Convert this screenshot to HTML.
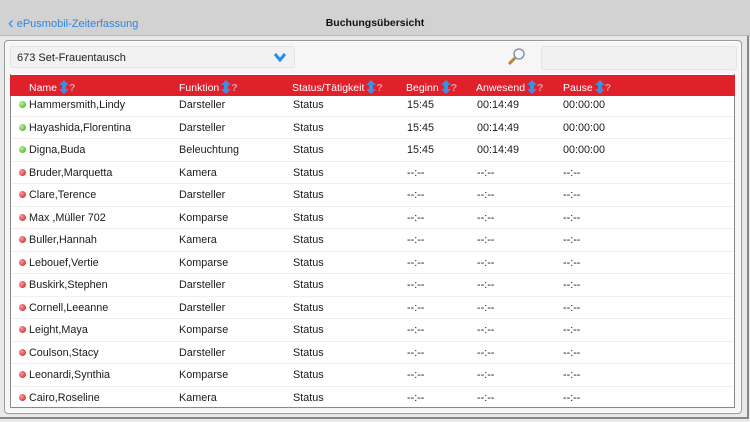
<!DOCTYPE html><html><head><style>
body{margin:0;width:750px;height:422px;background:#e9e9e9;font-family:"Liberation Sans",sans-serif;position:relative;overflow:hidden}
.bar{position:absolute;left:0;top:0;width:750px;height:35px;background:#d2d2d2;border-bottom:1px solid #bbb}
.back{position:absolute;left:8px;top:12px;color:#2c86e6;font-size:11px}
.title{position:absolute;left:0;width:750px;top:17px;text-align:center;font-weight:bold;font-size:10.5px;color:#111}
.panel{position:absolute;left:4px;top:40px;width:736px;height:372px;border:1px solid #999;border-radius:4px;background:#f6f6f6;box-shadow:inset 0 0 0 1px #fff}
.outer{position:absolute;left:0;top:0;width:747px;height:417px;border-right:2px solid #888;border-bottom:2px solid #888}
.sel{position:absolute;left:10px;top:46px;width:285px;height:22px;background:#f2f2f2;border:1px solid #e4e4e4;border-radius:3px;font-size:11px;line-height:22px;padding-left:6px;box-sizing:border-box;color:#222}
.srch{position:absolute;left:541px;top:46px;width:194px;height:22px;background:#f1f1f1;border:1px solid #e4e4e4;border-radius:3px}
.tbl{position:absolute;left:10px;top:74px;width:725px;height:334px;background:#fff;border:1px solid #888;border-top:none;box-sizing:border-box}
.hd{position:absolute;left:10px;top:75px;width:725px;height:21px;background:#e0202b}
.h{position:absolute;top:80px;color:#fff;font-size:10.5px;white-space:nowrap}
.h svg{vertical-align:-3px;margin-left:2px}
.q{color:#e69aa0;font-weight:bold}
.r{position:absolute;left:11px;width:723px;height:22.5px;border-bottom:1px solid #f0f0f0;font-size:10.8px;color:#1a1a1a}
.r span{position:absolute;top:6px}
.d{position:absolute;left:8px;top:8px;width:7px;height:7px;border-radius:50%}
.g{background:radial-gradient(circle at 35% 35%,#b8f59a,#3aa41a)}
.rd{background:radial-gradient(circle at 35% 35%,#ff9a9a,#c81818)}
</style></head><body>
<svg width="0" height="0" style="position:absolute"><defs><symbol id="a" viewBox="0 0 10 14"><path d="M5 0L10 5H7V9H10L5 14L0 9H3V5H0Z" fill="#3d8fe0"/></symbol></defs></svg>
<div class="outer"></div>
<div class="bar"><div class="back"><span style="font-size:17px;position:relative;top:1px">&#x2039;</span> ePusmobil-Zeiterfassung</div><div class="title">Buchungsübersicht</div></div>
<div class="panel"></div>
<div class="sel">673 Set-Frauentausch<svg style="position:absolute;left:263px;top:6px" width="12" height="9"><path d="M1 1L6 7L11 1" stroke="#1e8ff0" stroke-width="3" fill="none"/></svg></div>
<svg style="position:absolute;left:505px;top:47px" width="22" height="20"><circle cx="14" cy="7" r="5" fill="#f4f8fc" stroke="#789" stroke-width="1.3"/><path d="M10 11L4 17" stroke="#b8862a" stroke-width="3"/></svg>
<div class="srch"></div>
<div class="tbl"></div>
<div class="hd"></div>
<div class="h" style="left:29px">Name<svg width="10" height="14"><use href="#a"/></svg><span class="q">?</span></div>
<div class="h" style="left:179px">Funktion<svg width="10" height="14"><use href="#a"/></svg><span class="q">?</span></div>
<div class="h" style="left:292px">Status/Tätigkeit<svg width="10" height="14"><use href="#a"/></svg><span class="q">?</span></div>
<div class="h" style="left:406px">Beginn<svg width="10" height="14"><use href="#a"/></svg><span class="q">?</span></div>
<div class="h" style="left:476px">Anwesend<svg width="10" height="14"><use href="#a"/></svg><span class="q">?</span></div>
<div class="h" style="left:563px">Pause<svg width="10" height="14"><use href="#a"/></svg><span class="q">?</span></div>
<div class="r" style="top:93px"><i class="d g"></i><span style="left:18px">Hammersmith,Lindy</span><span style="left:168px">Darsteller</span><span style="left:282px">Status</span><span style="left:396px">15:45</span><span style="left:466px">00:14:49</span><span style="left:552px">00:00:00</span></div>
<div class="r" style="top:115.5px"><i class="d g"></i><span style="left:18px">Hayashida,Florentina</span><span style="left:168px">Darsteller</span><span style="left:282px">Status</span><span style="left:396px">15:45</span><span style="left:466px">00:14:49</span><span style="left:552px">00:00:00</span></div>
<div class="r" style="top:138px"><i class="d g"></i><span style="left:18px">Digna,Buda</span><span style="left:168px">Beleuchtung</span><span style="left:282px">Status</span><span style="left:396px">15:45</span><span style="left:466px">00:14:49</span><span style="left:552px">00:00:00</span></div>
<div class="r" style="top:160.5px"><i class="d rd"></i><span style="left:18px">Bruder,Marquetta</span><span style="left:168px">Kamera</span><span style="left:282px">Status</span><span style="left:396px">--:--</span><span style="left:466px">--:--</span><span style="left:552px">--:--</span></div>
<div class="r" style="top:183px"><i class="d rd"></i><span style="left:18px">Clare,Terence</span><span style="left:168px">Darsteller</span><span style="left:282px">Status</span><span style="left:396px">--:--</span><span style="left:466px">--:--</span><span style="left:552px">--:--</span></div>
<div class="r" style="top:205.5px"><i class="d rd"></i><span style="left:18px">Max ,Müller 702</span><span style="left:168px">Komparse</span><span style="left:282px">Status</span><span style="left:396px">--:--</span><span style="left:466px">--:--</span><span style="left:552px">--:--</span></div>
<div class="r" style="top:228px"><i class="d rd"></i><span style="left:18px">Buller,Hannah</span><span style="left:168px">Kamera</span><span style="left:282px">Status</span><span style="left:396px">--:--</span><span style="left:466px">--:--</span><span style="left:552px">--:--</span></div>
<div class="r" style="top:250.5px"><i class="d rd"></i><span style="left:18px">Lebouef,Vertie</span><span style="left:168px">Komparse</span><span style="left:282px">Status</span><span style="left:396px">--:--</span><span style="left:466px">--:--</span><span style="left:552px">--:--</span></div>
<div class="r" style="top:273px"><i class="d rd"></i><span style="left:18px">Buskirk,Stephen</span><span style="left:168px">Darsteller</span><span style="left:282px">Status</span><span style="left:396px">--:--</span><span style="left:466px">--:--</span><span style="left:552px">--:--</span></div>
<div class="r" style="top:295.5px"><i class="d rd"></i><span style="left:18px">Cornell,Leeanne</span><span style="left:168px">Darsteller</span><span style="left:282px">Status</span><span style="left:396px">--:--</span><span style="left:466px">--:--</span><span style="left:552px">--:--</span></div>
<div class="r" style="top:318px"><i class="d rd"></i><span style="left:18px">Leight,Maya</span><span style="left:168px">Komparse</span><span style="left:282px">Status</span><span style="left:396px">--:--</span><span style="left:466px">--:--</span><span style="left:552px">--:--</span></div>
<div class="r" style="top:340.5px"><i class="d rd"></i><span style="left:18px">Coulson,Stacy</span><span style="left:168px">Darsteller</span><span style="left:282px">Status</span><span style="left:396px">--:--</span><span style="left:466px">--:--</span><span style="left:552px">--:--</span></div>
<div class="r" style="top:363px"><i class="d rd"></i><span style="left:18px">Leonardi,Synthia</span><span style="left:168px">Komparse</span><span style="left:282px">Status</span><span style="left:396px">--:--</span><span style="left:466px">--:--</span><span style="left:552px">--:--</span></div>
<div class="r" style="top:385.5px;border-bottom:none"><i class="d rd"></i><span style="left:18px">Cairo,Roseline</span><span style="left:168px">Kamera</span><span style="left:282px">Status</span><span style="left:396px">--:--</span><span style="left:466px">--:--</span><span style="left:552px">--:--</span></div>
</body></html>
